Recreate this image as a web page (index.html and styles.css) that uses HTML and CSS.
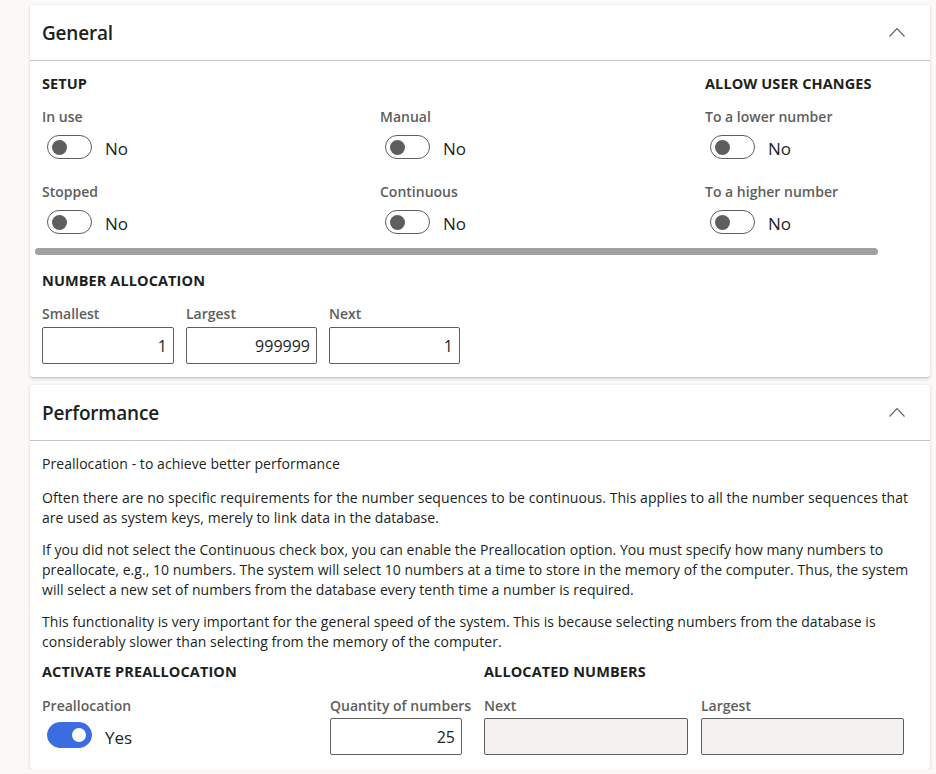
FILE: index.html
```html
<!DOCTYPE html>
<html lang="en">
<head>
<meta charset="utf-8">
<title>Number sequence</title>
<link rel="stylesheet" href="styles.css">
</head>
<body>
<main class="page">
  <section class="card">
    <header class="card-header">
      <h2 class="card-title">General</h2>
      <svg class="chevron" width="16" height="10" viewBox="0 0 16 10"><polyline points="0.5,9.5 8,1.5 15.5,9.5" fill="none" stroke="#605e5c" stroke-width="1.1"/></svg>
    </header>
    <div class="card-body general-body">
      <div class="general-top">
        <div class="group setup-group">
          <h3 class="group-title">SETUP</h3>
          <div class="setup-grid">
            <div class="field">
              <div class="label">In use</div>
              <div class="toggle-row"><span class="toggle"><span class="knob"></span></span><span class="toggle-text">No</span></div>
            </div>
            <div class="field">
              <div class="label">Manual</div>
              <div class="toggle-row"><span class="toggle"><span class="knob"></span></span><span class="toggle-text">No</span></div>
            </div>
            <div class="field">
              <div class="label">Stopped</div>
              <div class="toggle-row"><span class="toggle"><span class="knob"></span></span><span class="toggle-text">No</span></div>
            </div>
            <div class="field">
              <div class="label">Continuous</div>
              <div class="toggle-row"><span class="toggle"><span class="knob"></span></span><span class="toggle-text">No</span></div>
            </div>
          </div>
        </div>
        <div class="group allow-group">
          <h3 class="group-title">ALLOW USER CHANGES</h3>
          <div class="stack">
            <div class="field">
              <div class="label">To a lower number</div>
              <div class="toggle-row"><span class="toggle"><span class="knob"></span></span><span class="toggle-text">No</span></div>
            </div>
            <div class="field">
              <div class="label">To a higher number</div>
              <div class="toggle-row"><span class="toggle"><span class="knob"></span></span><span class="toggle-text">No</span></div>
            </div>
          </div>
        </div>
      </div>
      <div class="hscroll"></div>
      <div class="group">
        <h3 class="group-title">NUMBER ALLOCATION</h3>
        <div class="inputs-row">
          <div class="field">
            <div class="label">Smallest</div>
            <div class="input">1</div>
          </div>
          <div class="field">
            <div class="label">Largest</div>
            <div class="input">999999</div>
          </div>
          <div class="field">
            <div class="label">Next</div>
            <div class="input">1</div>
          </div>
        </div>
      </div>
    </div>
  </section>

  <section class="card">
    <header class="card-header">
      <h2 class="card-title">Performance</h2>
      <svg class="chevron" width="16" height="10" viewBox="0 0 16 10"><polyline points="0.5,9.5 8,1.5 15.5,9.5" fill="none" stroke="#605e5c" stroke-width="1.1"/></svg>
    </header>
    <div class="card-body perf-body">
      <p class="text intro">Preallocation - to achieve better performance</p>
      <p class="text">Often there are no specific requirements for the number sequences to be continuous. This applies to all the number sequences that are used as system keys, merely to link data in the database.</p>
      <p class="text">If you did not select the Continuous check box, you can enable the Preallocation option. You must specify how many numbers to preallocate, e.g., 10 numbers. The system will select 10 numbers at a time to store in the memory of the computer. Thus, the system will select a new set of numbers from the database every tenth time a number is required.</p>
      <p class="text">This functionality is very important for the general speed of the system. This is because selecting numbers from the database is considerably slower than selecting from the memory of the computer.</p>
      <div class="perf-bottom">
        <div class="group activate-group">
          <h3 class="group-title">ACTIVATE PREALLOCATION</h3>
          <div class="activate-row">
            <div class="field prealloc-field">
              <div class="label">Preallocation</div>
              <div class="toggle-row on-row"><span class="toggle on"><span class="knob"></span></span><span class="toggle-text">Yes</span></div>
            </div>
            <div class="field">
              <div class="label">Quantity of numbers</div>
              <div class="input">25</div>
            </div>
          </div>
        </div>
        <div class="group allocated-group">
          <h3 class="group-title">ALLOCATED NUMBERS</h3>
          <div class="allocated-row">
            <div class="field">
              <div class="label">Next</div>
              <div class="input disabled wide"></div>
            </div>
            <div class="field">
              <div class="label">Largest</div>
              <div class="input disabled wide2"></div>
            </div>
          </div>
        </div>
      </div>
    </div>
  </section>
</main>
</body>
</html>
```

FILE: styles.css
```css
* { box-sizing: border-box; }

html, body {
  margin: 0;
  padding: 0;
  background: #faf9f8;
}

body {
  font-family: "Open Sans", "Noto Sans", sans-serif;
  font-size: 14px;
  color: #201f1e;
}

.page {
  display: flex;
  flex-direction: column;
  gap: 8px;
  padding: 5px 6px 0 30px;
}

.card {
  background: #fff;
  border-radius: 2px;
  box-shadow: 0 1.6px 3.6px rgba(0,0,0,0.13), 0 0.3px 0.9px rgba(0,0,0,0.11);
}

.card-header {
  height: 56px;
  display: flex;
  align-items: center;
  justify-content: space-between;
  padding: 0 25px 0 12px;
  border-bottom: 1px solid #c8c6c4;
}

.card-title {
  margin: 0;
  font-size: 19px;
  font-weight: 600;
  letter-spacing: -0.2px;
  color: #201f1e;
}

.chevron {
  display: block;
  margin-top: -2px;
}

.card-body {
  padding: 13px 12px 13px 12px;
}

.group-title {
  margin: 0;
  font-size: 14.5px;
  line-height: 20px;
  font-weight: 700;
  letter-spacing: 0.1px;
  color: #201f1e;
}

.label {
  font-size: 14px;
  line-height: 20px;
  font-weight: 600;
  letter-spacing: 0;
  color: #605e5c;
  white-space: nowrap;
}

.general-top {
  display: flex;
}

.setup-group { width: 663px; }

.setup-grid {
  display: grid;
  grid-template-columns: 338px 1fr;
  row-gap: 23px;
  margin-top: 13px;
}

.stack {
  display: flex;
  flex-direction: column;
  gap: 23px;
  margin-top: 13px;
}

.toggle-row {
  display: flex;
  align-items: center;
  gap: 13px;
  margin-top: 8px;
  padding-left: 5px;
  height: 24px;
}

.toggle {
  width: 45px;
  height: 24px;
  border: 1px solid #605e5c;
  border-radius: 12px;
  display: flex;
  align-items: center;
  padding-left: 4px;
}

.knob {
  width: 15px;
  height: 15px;
  border-radius: 50%;
  background: #605e5c;
}

.toggle.on {
  background: #3c6de0;
  border-color: #3c6de0;
  justify-content: flex-end;
  padding: 0 5px 0 0;
  height: 26px;
  border-radius: 13px;
}

.toggle.on .knob {
  width: 14px;
  height: 14px;
  background: #fff;
}

.toggle-text {
  font-size: 17px;
  line-height: 24px;
  color: #201f1e;
  margin-top: 3px;
}

.on-row .toggle-text {
  margin-top: 5px;
}

.hscroll {
  height: 7px;
  width: 843px;
  margin: 14px 0 16px -7px;
  background: #a0a0a0;
  border-radius: 4px;
}

.inputs-row {
  display: flex;
  gap: 12px;
  margin-top: 13px;
}

.input {
  width: 132px;
  height: 37px;
  margin-top: 3px;
  border: 1px solid #605e5c;
  border-radius: 2px;
  text-align: right;
  padding: 0 6px 0 4px;
  font-size: 16px;
  line-height: 37px;
  color: #201f1e;
}

.inputs-row .field + .field .input { width: 131px; }

.input.disabled {
  background: #f3f2f1;
}

.input.wide { width: 204px; }
.input.wide2 { width: 203px; }

.perf-body {
  padding: 13px 12px 14px 12px;
}

.text {
  margin: 0 0 12px 0;
  width: 880px;
  font-size: 14px;
  line-height: 20px;
  letter-spacing: 0.05px;
  color: #201f1e;
}

.text.intro {
  margin-bottom: 14px;
}

.perf-bottom {
  display: flex;
  margin-top: -2px;
}

.activate-group { width: 442px; }

.activate-row,
.allocated-row {
  display: flex;
  margin-top: 14px;
}

.activate-row .input,
.allocated-row .input {
  margin-top: 2px;
}

.prealloc-field { width: 288px; }

.on-row {
  margin-top: 6px;
  height: 26px;
}

.allocated-row { gap: 13px; }
```
